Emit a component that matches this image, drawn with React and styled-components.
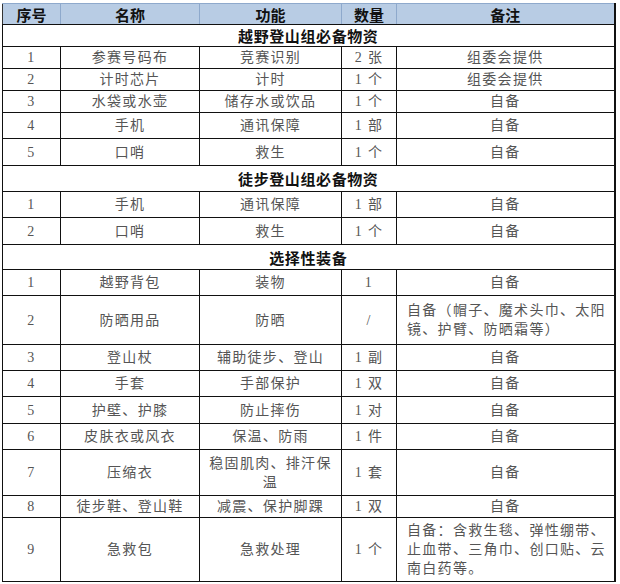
import styled, { createGlobalStyle } from "styled-components";

const GlobalStyle = createGlobalStyle`
  html, body {
    margin: 0;
    padding: 0;
    background: #ffffff;
  }
  body {
    font-family: "Liberation Serif", "Noto Sans CJK SC", serif;
  }
`;

const sections = [
  {
    title: "越野登山组必备物资",
    rows: [
      { no: "1", name: "参赛号码布", use: "竞赛识别", qty: "2 张", note: "组委会提供" },
      { no: "2", name: "计时芯片", use: "计时", qty: "1 个", note: "组委会提供" },
      { no: "3", name: "水袋或水壶", use: "储存水或饮品", qty: "1 个", note: "自备" },
      { no: "4", name: "手机", use: "通讯保障", qty: "1 部", note: "自备", h: 26 },
      { no: "5", name: "口哨", use: "救生", qty: "1 个", note: "自备", h: 27 }
    ]
  },
  {
    title: "徒步登山组必备物资",
    h: 26,
    rows: [
      { no: "1", name: "手机", use: "通讯保障", qty: "1 部", note: "自备", h: 26 },
      { no: "2", name: "口哨", use: "救生", qty: "1 个", note: "自备", h: 27 }
    ]
  },
  {
    title: "选择性装备",
    h: 25,
    rows: [
      { no: "1", name: "越野背包", use: "装物", qty: "1", note: "自备", h: 26 },
      {
        no: "2",
        name: "防晒用品",
        use: "防晒",
        qty: "/",
        note: ["自备（帽子、魔术头巾、太阳", "镜、护臂、防晒霜等）"],
        h: 49
      },
      { no: "3", name: "登山杖", use: "辅助徒步、登山", qty: "1 副", note: "自备", h: 26 },
      { no: "4", name: "手套", use: "手部保护", qty: "1 双", note: "自备", h: 26 },
      { no: "5", name: "护壁、护膝", use: "防止摔伤", qty: "1 对", note: "自备", h: 27 },
      { no: "6", name: "皮肤衣或风衣", use: "保温、防雨", qty: "1 件", note: "自备", h: 26 },
      { no: "7", name: "压缩衣", use: ["稳固肌肉、排汗保", "温"], qty: "1 套", note: "自备", h: 46 },
      { no: "8", name: "徒步鞋、登山鞋", use: "减震、保护脚踝", qty: "1 双", note: "自备", h: 22 },
      {
        no: "9",
        name: "急救包",
        use: "急救处理",
        qty: "1 个",
        note: ["自备：含救生毯、弹性绷带、", "止血带、三角巾、创口贴、云", "南白药等。"],
        h: 64
      }
    ]
  }
];

const Lines = ({ text }) =>
  Array.isArray(text)
    ? text.map((line, i) => (
        <span key={i}>
          {line}
          {i < text.length - 1 && <br />}
        </span>
      ))
    : text;

export default function App() {
  return (
    <Page>
      <GlobalStyle />
      <Table>
        <colgroup>
          <col style={{ width: 58 }} />
          <col style={{ width: 139 }} />
          <col style={{ width: 142 }} />
          <col style={{ width: 55 }} />
          <col style={{ width: 218 }} />
        </colgroup>
        <thead>
          <HeadRow>
            <HeadCell>序号</HeadCell>
            <HeadCell>名称</HeadCell>
            <HeadCell>功能</HeadCell>
            <HeadCell>数量</HeadCell>
            <HeadCell>备注</HeadCell>
          </HeadRow>
        </thead>
        <tbody>
          {sections.map(section => [
            <Row key={section.title} $h={section.h || 22}>
              <SectionCell colSpan={5}>{section.title}</SectionCell>
            </Row>,
            ...section.rows.map(row => (
              <Row key={section.title + row.no} $h={row.h || 22}>
                <Cell>{row.no}</Cell>
                <Cell>{row.name}</Cell>
                <Cell>
                  <Lines text={row.use} />
                </Cell>
                <Cell>{row.qty}</Cell>
                <Cell $left={Array.isArray(row.note)}>
                  <Lines text={row.note} />
                </Cell>
              </Row>
            ))
          ])}
        </tbody>
      </Table>
    </Page>
  );
}

const Page = styled.div`
  width: 620px;
  height: 584px;
  padding: 3px 0 0 2px;
  box-sizing: border-box;
  background: #ffffff;
`;

const Table = styled.table`
  width: 613px;
  table-layout: fixed;
  border-collapse: collapse;
  border-right: 2px solid #111;
`;

const HeadRow = styled.tr`
  height: 21px;
  background: #b8cce4;
`;

const HeadCell = styled.th`
  padding: 0;
  border: 1px solid #8ea9cc;
  border-bottom: 1px solid #111;
  font-family: "Noto Sans CJK SC", sans-serif;
  font-size: 15px;
  font-weight: 700;
  line-height: 19px;
  color: #111;
  text-align: center;
  &:first-child {
    border-left: 1px solid #333;
  }
  &:last-child {
    border-right: 2px solid #111;
  }
`;

const Row = styled.tr`
  height: ${p => p.$h}px;
`;

const Cell = styled.td`
  padding: 0 ${p => (p.$left ? "6px 0 10px" : "2px")};
  border: 1px solid #111;
  font-size: 14px;
  letter-spacing: 1.3px;
  line-height: 19px;
  color: #555;
  text-align: ${p => (p.$left ? "left" : "center")};
  vertical-align: middle;
  white-space: nowrap;
`;

const SectionCell = styled.td`
  padding: 0;
  border: 1px solid #111;
  font-family: "Noto Sans CJK SC", sans-serif;
  font-size: 15px;
  font-weight: 700;
  letter-spacing: 0.6px;
  color: #111;
  text-align: center;
  vertical-align: middle;
`;
